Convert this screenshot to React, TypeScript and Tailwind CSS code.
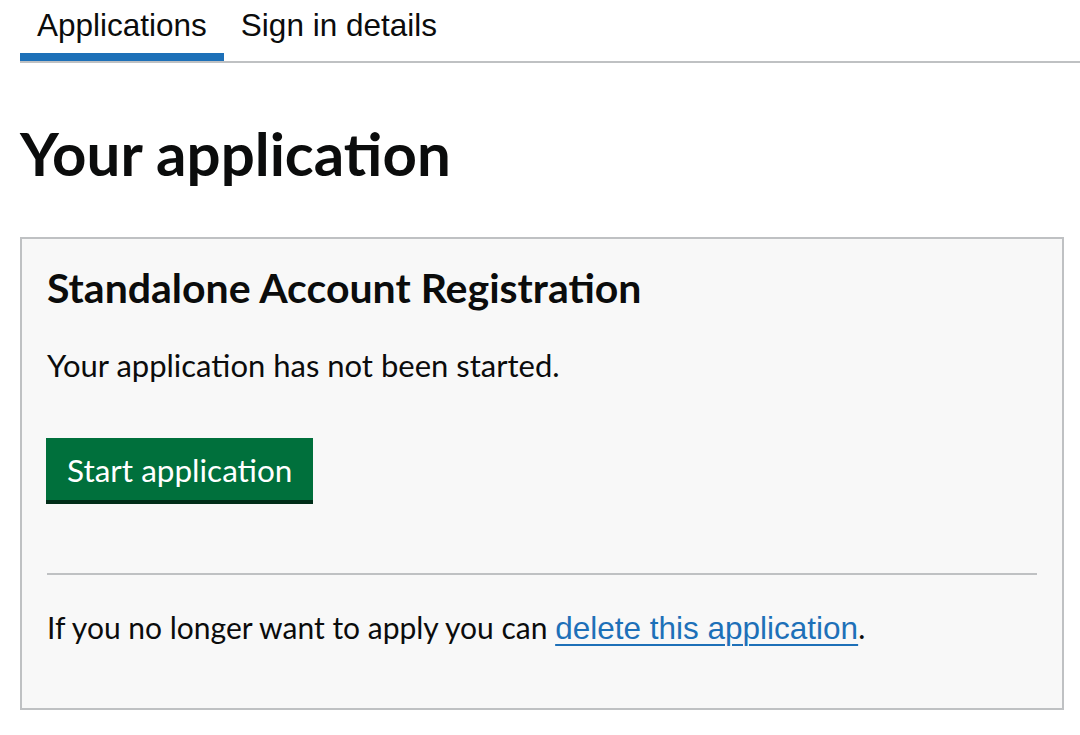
import React from 'react';

const body = { fontFamily: 'Lato, "Noto Sans", Arial, sans-serif' };

export default function App() {
  return (
    <div className="min-h-screen bg-white text-[#0b0c0c]">
      {/* Tabs */}
      <div className="pl-5">
        <div className="flex border-b-2 border-[#bfc1c3] font-['Liberation_Sans',Arial,sans-serif] text-[31.5px] leading-none">
          <div className="border-b-[8px] border-[#1d70b8] px-[17px] pt-[10px] pb-[11.5px]">Applications</div>
          <div className="px-[17px] pt-[10px] pb-[11.5px]">Sign in details</div>
        </div>
      </div>

      <div className="px-5" style={body}>
        <h1 className="mt-[61px] mb-[55px] text-[60px] font-bold leading-[58px]">Your application</h1>

        <div className="w-[1044px] border-2 border-[#bfc1c3] bg-[#f8f8f8] px-[25px] pt-[28px] pb-[65px]">
          <h2 className="text-[41px] font-bold leading-[41px]">Standalone Account Registration</h2>
          <p className="mt-[42px] text-[31px] leading-[30px]">Your application has not been started.</p>
          <button className="mt-[58px] -ml-px bg-[#00703c] px-[21px] pt-[17px] pb-[15px] text-[31.5px] leading-[30px] text-white shadow-[0_4px_0_#002d18]">
            Start application
          </button>
          <hr className="mt-[73px] border-t-2 border-[#bfc1c3]" />
          <p className="mt-[37px] text-[30px] leading-[30px]">
            If you no longer want to apply you can{' '}
            <a href="#" className="font-['Liberation_Sans',Arial,sans-serif] text-[31.5px] text-[#1d70b8] underline decoration-2 underline-offset-[5px]">delete this application</a>.
          </p>
        </div>
      </div>
    </div>
  );
}
